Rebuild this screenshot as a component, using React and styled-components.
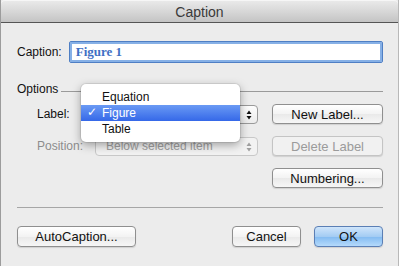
import React from 'react';
import styled, { createGlobalStyle, css } from 'styled-components';

const Global = createGlobalStyle`
  html, body {
    margin: 0;
    padding: 0;
    background: #ececec;
  }
  body {
    font-family: "Liberation Sans", Arial, sans-serif;
    font-size: 12px;
    color: #111;
  }
`;

const Window = styled.div`
  width: 399px;
  height: 266px;
  box-sizing: border-box;
  background: #ececec;
  border-left: 1px solid #9c9c9c;
  border-right: 1px solid #b8b8b8;
  display: flex;
  flex-direction: column;
  overflow: hidden;
`;

const TitleBar = styled.div`
  height: 23px;
  flex: none;
  border-bottom: 1px solid #555;
  border-radius: 4px 4px 0 0;
  background: linear-gradient(#ebebeb, #d6d6d6 55%, #c4c4c4);
  box-shadow: inset 0 1px 0 #f6f6f6;
  display: flex;
  align-items: center;
  justify-content: center;
  font-size: 14px;
  color: #3a3a3a;
  padding-top: 2px;
  box-sizing: border-box;
`;

const Body = styled.div`
  flex: 1;
  display: flex;
  flex-direction: column;
  padding: 18px 15px 0 16px;
`;

const CaptionRow = styled.div`
  display: flex;
  align-items: center;
  gap: 7px;
`;

const Text = styled.span`
  font-size: 12px;
  color: ${p => (p.$dim ? '#8c8c8c' : '#111')};
  white-space: nowrap;
`;

const CaptionInput = styled.div`
  flex: 1;
  height: 22px;
  box-sizing: border-box;
  background: #fff;
  border: 1px solid #4f7fc4;
  box-shadow: 0 0 0 2px #86b0e6 inset;
  border-radius: 2px;
  display: flex;
  align-items: center;
  padding: 0 6px;
  font-family: "Liberation Serif", "Times New Roman", serif;
  font-weight: bold;
  font-size: 13px;
  color: #3f70c4;
`;

const GroupHead = styled.div`
  margin-top: 19px;
  display: flex;
  align-items: center;
  gap: 3px;
`;

const Rule = styled.div`
  flex: 1;
  height: 1px;
  background: #9a9a9a;
  margin-top: 4px;
`;

const Options = styled.div`
  margin-top: 8px;
  display: grid;
  grid-template-columns: 1fr 111px;
  column-gap: 14px;
`;

const Fields = styled.div`
  display: flex;
  flex-direction: column;
  gap: 12px;
  padding-left: 20px;
`;

const FieldRow = styled.div`
  position: relative;
  height: 20px;
  display: flex;
  align-items: center;
`;

const FieldLabel = styled(Text)`
  width: 58px;
`;

const Popup = styled.div`
  position: relative;
  width: 163px;
  height: 19px;
  box-sizing: border-box;
  border: 1px solid ${p => (p.$disabled ? '#c8c8c8' : '#9a9a9a')};
  border-radius: 4px;
  background: ${p => (p.$disabled ? '#f2f2f2' : 'linear-gradient(#fdfdfd, #ececec)')};
  display: flex;
  align-items: center;
  padding-left: 10px;
  font-size: 12px;
  color: ${p => (p.$disabled ? '#a0a0a0' : '#111')};
`;

const Stepper = styled.svg`
  position: absolute;
  right: 5px;
  top: 4px;
`;

const Menu = styled.div`
  position: absolute;
  left: 44px;
  top: -20px;
  width: 159px;
  padding: 5px 0;
  box-sizing: border-box;
  background: #fff;
  border-radius: 5px;
  box-shadow: 0 3px 10px rgba(0, 0, 0, 0.35), 0 0 0 1px rgba(0, 0, 0, 0.08);
  z-index: 5;
`;

const MenuItem = styled.div`
  position: relative;
  height: 16px;
  display: flex;
  align-items: center;
  padding-left: 21px;
  font-size: 12px;
  color: #111;
  ${p => p.$active && css`
    color: #fff;
    background: linear-gradient(#6a9af4, #3568e8);
  `}
`;

const Check = styled.span`
  position: absolute;
  left: 6px;
  top: 0;
  font-family: "DejaVu Sans", sans-serif;
  font-size: 12px;
  font-weight: bold;
`;

const Buttons = styled.div`
  display: flex;
  flex-direction: column;
  gap: 12px;
`;

const Button = styled.div`
  height: ${p => p.$h || 20}px;
  box-sizing: border-box;
  width: ${p => p.$w || 111}px;
  border: 1px solid ${p => (p.$disabled ? '#c4c4c4' : p.$primary ? '#5b7fb5' : '#8f8f8f')};
  border-radius: 4px;
  background: ${p =>
    p.$primary
      ? 'linear-gradient(#cfe5fb, #a4ccf3 50%, #82baf1 51%, #b5dafb)'
      : p.$disabled
      ? '#f1f1f1'
      : 'linear-gradient(#ffffff, #f3f3f3 50%, #e9e9e9 51%, #f6f6f6)'};
  box-shadow: 0 1px 1px rgba(0, 0, 0, 0.12);
  display: flex;
  align-items: center;
  justify-content: center;
  font-size: 13px;
  color: ${p => (p.$disabled ? '#9b9b9b' : '#111')};
`;

const Separator = styled.div`
  height: 1px;
  background: #a6a6a6;
  margin-top: 19px;
`;

const Footer = styled.div`
  margin-top: 18px;
  display: flex;
  align-items: center;
  gap: 13px;
`;

const Spacer = styled.div`
  flex: 1;
`;

const Arrows = () => (
  <Stepper width="6" height="10" viewBox="0 0 6 10">
    <path d="M3 0.5 L5.5 4 L0.5 4 Z M3 9.5 L5.5 6 L0.5 6 Z" fill="currentColor" />
  </Stepper>
);

export default function App() {
  return (
    <Window>
      <Global />
      <TitleBar>Caption</TitleBar>
      <Body>
        <CaptionRow>
          <Text>Caption:</Text>
          <CaptionInput>Figure 1</CaptionInput>
        </CaptionRow>

        <GroupHead>
          <Text>Options</Text>
          <Rule />
        </GroupHead>

        <Options>
          <Fields>
            <FieldRow>
              <FieldLabel>Label:</FieldLabel>
              <Popup>
                <Arrows />
              </Popup>
              <Menu>
                <MenuItem>Equation</MenuItem>
                <MenuItem $active>
                  <Check>✓</Check>Figure
                </MenuItem>
                <MenuItem>Table</MenuItem>
              </Menu>
            </FieldRow>
            <FieldRow>
              <FieldLabel $dim>Position:</FieldLabel>
              <Popup $disabled>
                Below selected item
                <Arrows />
              </Popup>
            </FieldRow>
          </Fields>
          <Buttons>
            <Button>New Label...</Button>
            <Button $disabled>Delete Label</Button>
            <Button>Numbering...</Button>
          </Buttons>
        </Options>

        <Separator />

        <Footer>
          <Button $w={119} $h={21}>AutoCaption...</Button>
          <Spacer />
          <Button $w={69} $h={21}>Cancel</Button>
          <Button $w={69} $h={21} $primary>OK</Button>
        </Footer>
      </Body>
    </Window>
  );
}
